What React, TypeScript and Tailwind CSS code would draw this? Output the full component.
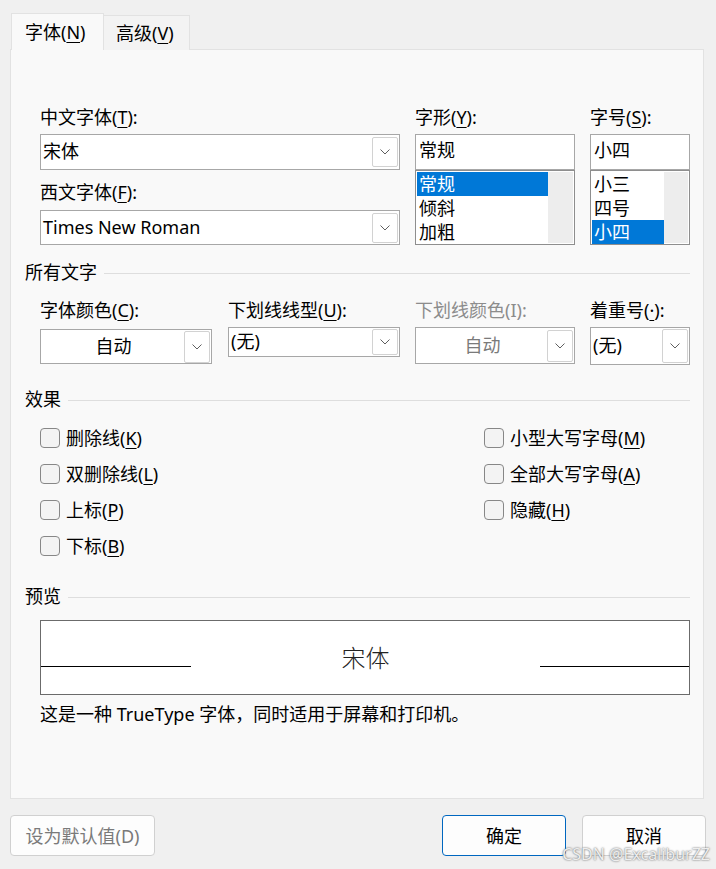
import { ReactNode } from "react";

const Chevron = () => (
  <svg width="10" height="6" viewBox="0 0 10 6" fill="none">
    <path d="M0.5 0.5 L5 5 L9.5 0.5" stroke="#5f5f5f" strokeWidth="1" />
  </svg>
);

const Mn = ({ children }: { children: ReactNode }) => (
  <u className="underline underline-offset-[3px] decoration-1">{children}</u>
);

type ComboProps = {
  text: string;
  width: string;
  height: string;
  center?: boolean;
  muted?: boolean;
  btn: string;
};

const Combo = ({ text, width, height, center, muted, btn }: ComboProps) => (
  <div
    className={`${width} ${height} flex items-center border border-[#a7a7a7] bg-white pl-[2px] pr-[1px]`}
  >
    <span
      className={`flex-1 -mt-[2px] ${center ? "text-center" : "text-left"} ${muted ? "text-[#7a7a7a]" : "text-black"}`}
    >
      {text}
    </span>
    <div
      className={`${btn} w-[26px] flex items-center justify-center rounded-[2px] border border-[#d2d2d2] bg-white`}
    >
      <Chevron />
    </div>
  </div>
);

const Heading = ({ label }: { label: string }) => (
  <div className="flex h-6 items-center gap-[7px]">
    <span>{label}</span>
    <div className="h-px flex-1 bg-[#dedede] mt-[2px]" />
  </div>
);

const Check = ({ children }: { children: ReactNode }) => (
  <div className="flex h-9 items-center gap-[6px]">
    <div className="h-5 w-5 rounded-[4px] border border-[#878787] bg-[#f3f3f3]" />
    <span>{children}</span>
  </div>
);

const ListBox = ({
  items,
  selected,
  itemWidth,
  width,
}: {
  items: string[];
  selected: number;
  itemWidth: string;
  width: string;
}) => (
  <div className={`${width} h-[75px] border border-[#8e8e8e] bg-white flex p-px`}>
    <div className={`${itemWidth} flex flex-col`}>
      {items.map((it, i) => (
        <div
          key={it}
          className={`h-6 pl-[2px] leading-6 ${i === selected ? "bg-[#0078d7] text-white" : "text-black"}`}
        >
          {it}
        </div>
      ))}
    </div>
    <div className="flex-1 bg-[#ededed]" />
  </div>
);

export default function App() {
  return (
    <div className="relative h-[869px] w-[716px] overflow-hidden bg-[#f0f0f0] font-[Noto_Sans,Noto_Sans_CJK_SC,sans-serif] text-[18px] leading-6 text-black">
      {/* tabs */}
      <div className="flex items-end pl-[11px] pt-[13px]">
        <div className="relative z-10 flex h-[37px] w-[93px] items-center border border-b-0 border-[#e2e2e2] bg-[#f9f9f9] pl-[13px]">
          <span>
            字体(<Mn>N</Mn>)
          </span>
        </div>
        <div className="flex h-[35px] w-[86px] items-center border border-l-0 border-b-0 border-[#e2e2e2] bg-[#f3f3f3] pl-[12px]">
          <span>
            高级(<Mn>V</Mn>)
          </span>
        </div>
      </div>

      {/* panel */}
      <div className="-mt-px ml-[10px] h-[750px] w-[694px] border border-[#e2e2e2] bg-[#f9f9f9] pl-[14px] pr-[13px]">
        {/* font pickers */}
        <div className="mt-[55px] flex pl-[15px]">
          <div className="flex w-[360px] flex-col">
            <div className="h-6">
              中文字体(<Mn>T</Mn>):
            </div>
            <div className="mt-[5px]">
              <Combo text="宋体" width="w-[360px]" height="h-[36px]" btn="h-[30px]" />
            </div>
            <div className="mt-[10px] h-6">
              西文字体(<Mn>F</Mn>):
            </div>
            <div className="mt-[6px]">
              <Combo text="Times New Roman" width="w-[360px]" height="h-[35px]" btn="h-[30px]" />
            </div>
          </div>
          <div className="ml-[15px] flex w-[160px] flex-col">
            <div className="h-6">
              字形(<Mn>Y</Mn>):
            </div>
            <div className="mt-[5px] h-[36px] w-[160px] border border-[#a7a7a7] bg-white pl-[3px] leading-[31px]">
              常规
            </div>
            <ListBox items={["常规", "倾斜", "加粗"]} selected={0} itemWidth="w-[131px]" width="w-[160px]" />
          </div>
          <div className="ml-[15px] flex w-[100px] flex-col">
            <div className="h-6">
              字号(<Mn>S</Mn>):
            </div>
            <div className="mt-[5px] h-[36px] w-[100px] border border-[#a7a7a7] bg-white pl-[3px] leading-[31px]">
              小四
            </div>
            <ListBox items={["小三", "四号", "小四"]} selected={2} itemWidth="w-[72px]" width="w-[100px]" />
          </div>
        </div>

        {/* all text */}
        <div className="mt-[15px]">
          <Heading label="所有文字" />
        </div>
        <div className="mt-[14px] flex items-start pl-[15px]">
          <div className="flex w-[172px] flex-col">
            <div className="h-6">
              字体颜色(<Mn>C</Mn>):
            </div>
            <div className="mt-[7px]">
              <Combo text="自动" center width="w-[172px]" height="h-[35px]" btn="h-[32px]" />
            </div>
          </div>
          <div className="ml-[16px] flex w-[172px] flex-col">
            <div className="h-6">
              下划线线型(<Mn>U</Mn>):
            </div>
            <div className="mt-[5px]">
              <Combo text="(无)" width="w-[172px]" height="h-[30px]" btn="h-[26px]" />
            </div>
          </div>
          <div className="ml-[15px] flex w-[160px] flex-col">
            <div className="h-6 text-[#8c8c8c]">下划线颜色(I):</div>
            <div className="mt-[5px]">
              <Combo text="自动" center muted width="w-[160px]" height="h-[37px]" btn="h-[32px]" />
            </div>
          </div>
          <div className="ml-[15px] flex w-[100px] flex-col">
            <div className="h-6">
              着重号(<Mn>·</Mn>):
            </div>
            <div className="mt-[5px]">
              <Combo text="(无)" width="w-[100px]" height="h-[38px]" btn="h-[34px]" />
            </div>
          </div>
        </div>

        {/* effects */}
        <div className="mt-[22px]">
          <Heading label="效果" />
        </div>
        <div className="mt-[9px] flex pl-[15px]">
          <div className="flex w-[444px] flex-col">
            <Check>
              删除线(<Mn>K</Mn>)
            </Check>
            <Check>
              双删除线(<Mn>L</Mn>)
            </Check>
            <Check>
              上标(<Mn>P</Mn>)
            </Check>
            <Check>
              下标(<Mn>B</Mn>)
            </Check>
          </div>
          <div className="flex flex-col">
            <Check>
              小型大写字母(<Mn>M</Mn>)
            </Check>
            <Check>
              全部大写字母(<Mn>A</Mn>)
            </Check>
            <Check>
              隐藏(<Mn>H</Mn>)
            </Check>
          </div>
        </div>

        {/* preview */}
        <div className="mt-[20px]">
          <Heading label="预览" />
        </div>
        <div className="ml-[15px] mt-[12px] flex h-[75px] w-[650px] items-center border border-[#6b6b6b] bg-white">
          <div className="mt-[17px] h-px w-[150px] bg-black" />
          <div className="flex-1 text-center text-[24px] font-light leading-[30px] text-[#222]">宋体</div>
          <div className="mt-[17px] h-px w-[149px] bg-black" />
        </div>
        <div className="ml-[15px] mt-[7px] h-6">这是一种 TrueType 字体，同时适用于屏幕和打印机。</div>
      </div>

      {/* buttons */}
      <div className="mt-[16px] flex px-[10px] leading-5">
        <button className="flex h-[41px] w-[145px] items-center justify-center rounded-[4px] border border-[#d0d0d0] bg-[#fdfdfd] text-[#7a7a7a]">
          设为默认值(D)
        </button>
        <button className="ml-auto flex h-[41px] w-[124px] items-center justify-center rounded-[4px] border border-[#0067c0] bg-[#fdfdfd]">
          确定
        </button>
        <button className="ml-[16px] flex h-[41px] w-[124px] items-center justify-center rounded-[4px] border border-[#d0d0d0] bg-[#fdfdfd]">
          取消
        </button>
      </div>

      <div className="absolute bottom-[7px] right-[6px] text-[16px] leading-4 text-[#eeeeee] [text-shadow:0_0_2px_#444]">
        CSDN @ExcaliburZZ
      </div>
    </div>
  );
}
